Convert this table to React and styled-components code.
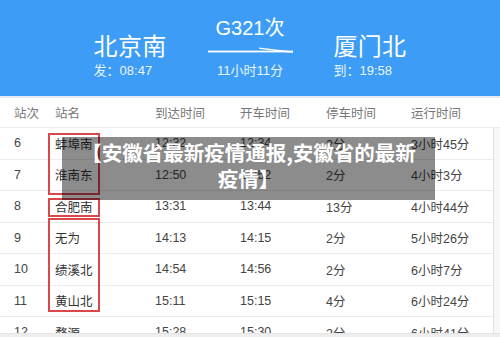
import React from "react";
import styled, { createGlobalStyle } from "styled-components";

const Global = createGlobalStyle`
  html, body { margin: 0; padding: 0; background: #fff; }
  * { box-sizing: border-box; }
`;

const Page = styled.div`
  position: relative;
  width: 500px;
  height: 337px;
  overflow: hidden;
  display: flex;
  flex-direction: column;
  background: #fff;
  font-family: "Liberation Sans", "Noto Sans CJK SC", sans-serif;
`;

const Header = styled.header`
  height: 96px;
  flex: none;
  background: #3d9df6;
  color: #fff;
  display: flex;
  justify-content: center;
  align-items: flex-start;
  gap: 41px;
  padding-top: 16px;
`;

const CityBlock = styled.div`
  display: flex;
  flex-direction: column;
  margin-top: 15px;
`;

const City = styled.div`
  font-family: "Noto Sans CJK SC", sans-serif;
  font-size: 24px;
  line-height: 28px;
  letter-spacing: 0.3px;
`;

const Sub = styled.div`
  font-size: 13px;
  line-height: 16px;
  margin-top: ${(p) => p.$mt || 4}px;
  color: rgba(255, 255, 255, 0.92);
  text-align: ${(p) => (p.$center ? "center" : "left")};
  white-space: nowrap;
`;

const TrainBlock = styled.div`
  width: 85px;
  display: flex;
  flex-direction: column;
  align-items: center;
`;

const TrainNo = styled.div`
  font-size: 20px;
  line-height: 24px;
  white-space: nowrap;
`;

const ArrowSvg = styled.svg`
  display: block;
  margin-top: 7px;
`;

const Divider = styled.div`
  height: 2px;
  flex: none;
  background: #e4ebf2;
`;

const Table = styled.section`
  position: relative;
  flex: 1;
  min-height: 0;
  overflow: hidden;
  display: flex;
  flex-direction: column;
  color: #444;
  font-size: 12.5px;
`;

const Grid = styled.div`
  display: grid;
  grid-template-columns: 41px 100px 85px 86px 85px 1fr;
  align-items: center;
  padding-left: 14px;
  height: ${(p) => p.$h}px;
  flex: none;
  border-bottom: 1px solid #ececec;
  color: ${(p) => (p.$head ? "#777" : "#444")};
`;

const Cell = styled.div`
  white-space: nowrap;
  color: ${(p) => (p.$name ? "#333" : "inherit")};
`;

const BodyWrap = styled.div`
  display: flex;
  flex: 1;
  min-height: 0;
`;

const Rows = styled.div`
  width: 493px;
  display: flex;
  flex-direction: column;
`;

const SideStrip = styled.div`
  flex: 1;
  border-left: 1px solid #e2e2e2;
  background: #f7f7f7;
`;

const Mark = styled.div`
  position: absolute;
  left: 48px;
  width: 52px;
  top: ${(p) => p.$top}px;
  height: ${(p) => p.$h}px;
  border: 2px solid #d9474b;
  pointer-events: none;
`;

const BottomBand = styled.div`
  height: 4px;
  flex: none;
  background: #eeeeee;
  border-top: 1px solid #e4e4e4;
`;

const Overlay = styled.div`
  position: absolute;
  left: 62px;
  top: 137px;
  width: 373px;
  height: 63px;
  background: rgba(0, 0, 0, 0.45);
  color: #fff;
  font-family: "Noto Sans CJK SC", sans-serif;
  font-weight: 700;
  font-size: 20.5px;
  line-height: 26px;
  text-align: center;
  padding: 2px 12px 0;
`;

const heads = ["站次", "站名", "到达时间", "开车时间", "停车时间", "运行时间"];

const rows = [
  ["6", "蚌埠南", "12:32", "12:34", "2分", "3小时45分"],
  ["7", "淮南东", "12:50", "12:52", "2分", "4小时3分"],
  ["8", "合肥南", "13:31", "13:44", "13分", "4小时44分"],
  ["9", "无为", "14:13", "14:15", "2分", "5小时26分"],
  ["10", "绩溪北", "14:54", "14:56", "2分", "6小时7分"],
  ["11", "黄山北", "15:11", "15:15", "4分", "6小时24分"],
  ["12", "婺源", "15:28", "15:30", "2分", "6小时41分"],
];

function Arrow() {
  return (
    <ArrowSvg width="85" height="7" viewBox="0 0 85 7">
      <rect x="0" y="3.6" width="85" height="1.8" fill="#fff" />
      <path d="M51 0.4 L85 4.6 L85 5.4 L80 5.4 L51 1.8 Z" fill="#fff" />
    </ArrowSvg>
  );
}

export default function App() {
  return (
    <>
      <Global />
      <Page>
        <Header>
          <CityBlock>
            <City>北京南</City>
            <Sub>发：08:47</Sub>
          </CityBlock>
          <TrainBlock>
            <TrainNo>G321次</TrainNo>
            <Arrow />
            <Sub $center $mt={9}>11小时11分</Sub>
          </TrainBlock>
          <CityBlock>
            <City>厦门北</City>
            <Sub>到：19:58</Sub>
          </CityBlock>
        </Header>
        <Divider />
        <Table>
          <Grid $head $h={30}>
            {heads.map((h) => (
              <Cell key={h}>{h}</Cell>
            ))}
          </Grid>
          <BodyWrap>
            <Rows>
              {rows.map((r) => (
                <Grid key={r[0]} $h={31.5}>
                  {r.map((c, i) => (
                    <Cell key={i} $name={i === 1}>
                      {c}
                    </Cell>
                  ))}
                </Grid>
              ))}
            </Rows>
            <SideStrip />
          </BodyWrap>
          <Mark $top={35} $h={62} />
          <Mark $top={100} $h={19} />
          <Mark $top={120} $h={94} />
        </Table>
        <BottomBand />
        <Overlay>【安徽省最新疫情通报,安徽省的最新疫情】</Overlay>
      </Page>
    </>
  );
}
